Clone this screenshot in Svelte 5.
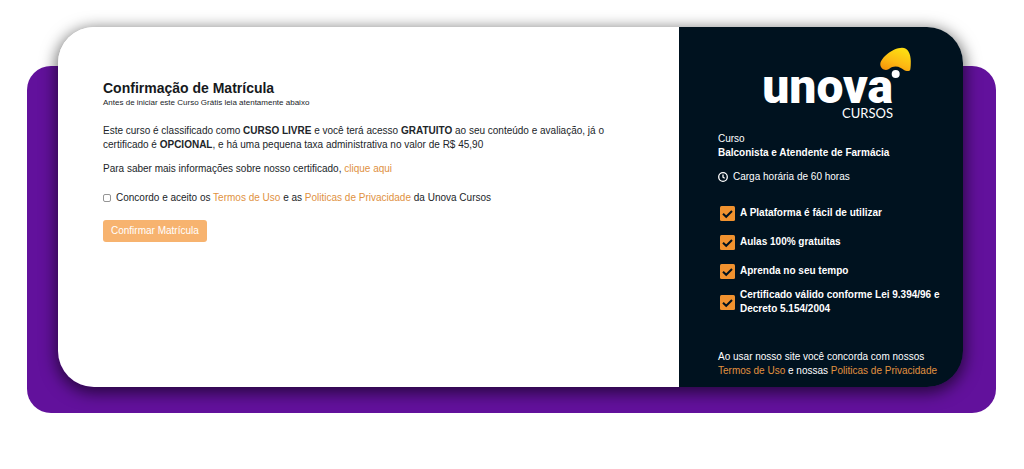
<script>
  const benefits = [
    'A Plataforma é fácil de utilizar',
    'Aulas 100% gratuitas',
    'Aprenda no seu tempo',
    'Certificado válido conforme Lei 9.394/96 e Decreto 5.154/2004'
  ];
  let accepted = $state(false);
</script>

<div class="backdrop">
  <div class="card">
    <main>
      <h1>Confirmação de Matrícula</h1>
      <p class="lead">Antes de iniciar este Curso Grátis leia atentamente abaixo</p>
      <p class="about">
        Este curso é classificado como <b>CURSO LIVRE</b> e você terá acesso <b>GRATUITO</b> ao seu conteúdo e avaliação, já o certificado é <b>OPCIONAL</b>, e há uma pequena taxa administrativa no valor de R$ 45,90
      </p>
      <p class="more">Para saber mais informações sobre nosso certificado, <a href="#certificado">clique aqui</a></p>
      <div class="agree">
        <input id="accept" type="checkbox" bind:checked={accepted} />
        <label for="accept">Concordo e aceito os <a href="#termos">Termos de Uso</a> e as <a href="#privacidade">Politicas de Privacidade</a> da Unova Cursos</label>
      </div>
      <button type="button" class:ready={accepted}>Confirmar Matrícula</button>
    </main>

    <aside>
      <div class="logo">
        <svg class="mark" viewBox="0 0 32 32" aria-hidden="true">
          <defs>
            <linearGradient id="flame" x1="0" y1="1" x2="0.5" y2="0">
              <stop offset="0" stop-color="#f58a07" />
              <stop offset="0.5" stop-color="#fdb913" />
              <stop offset="1" stop-color="#fddb12" />
            </linearGradient>
          </defs>
          <path fill="url(#flame)" d="M0.3 17C1 11 12 1 22 0.8C28 0.8 30.8 7 30.8 14C30.8 17 30.8 20 30.3 22.5C30 24.5 26 24.3 24 23C21.5 21.5 19.5 19.5 15.5 19.5C10.5 19.5 9 23 6 23C3 23 0 20 0.3 17Z" />
          <circle cx="15.7" cy="27" r="4" fill="#fff" />
        </svg>
        <span class="name">unova</span>
        <span class="sub">CURSOS</span>
      </div>

      <p>Curso<br /><b>Balconista e Atendente de Farmácia</b></p>
      <p class="hours">
        <svg viewBox="0 0 10 10" aria-hidden="true">
          <circle cx="5" cy="5" r="4.3" />
          <path d="M5 2.4V5.2L6.7 6.3" />
        </svg>
        Carga horária de 60 horas
      </p>

      <ul>
        {#each benefits as benefit}
          <li>
            <svg viewBox="0 0 15 15" aria-hidden="true">
              <rect width="15" height="15" rx="1.5" fill="#f0922f" />
              <path d="M3 7.7L6.2 10.8L12 5" fill="none" stroke="#00121f" stroke-width="2" />
            </svg>
            <span>{benefit}</span>
          </li>
        {/each}
      </ul>

      <p class="legal">
        Ao usar nosso site você concorda com nossos <a href="#termos">Termos de Uso</a> e nossas <a href="#privacidade">Politicas de Privacidade</a>
      </p>
    </aside>
  </div>
</div>

<style>
  :global(body) {
    background: #fff;
  }

  .backdrop {
    display: flow-root;
    margin: 66px 28px 56px 27px;
    padding: 0 33px 26px 31px;
    border-radius: 24px;
    background: #62119c;
    color: #212529;
    font: 10px/14px "Liberation Sans", Arial, sans-serif;
  }

  .card {
    display: grid;
    grid-template-columns: 621fr 284fr;
    margin-top: -39px;
    border-radius: 36px;
    box-shadow: 0 4px 16px 2px rgba(0, 0, 0, 0.6);
  }

  p,
  h1,
  ul {
    margin: 0;
    padding: 0;
  }

  a {
    color: #e0913f;
    text-decoration: none;
  }

  main {
    padding: 52px 64px 40px 45px;
    border-radius: 36px 0 0 36px;
    background: #fff;
  }

  h1 {
    color: #16191c;
    font-size: 14px;
    line-height: 18px;
  }

  .lead {
    font-size: 8px;
    line-height: 12px;
  }

  .about {
    margin-top: 15px;
  }

  .more {
    margin-top: 10px;
  }

  .agree {
    display: flex;
    align-items: center;
    gap: 5px;
    margin-top: 15px;
  }

  input {
    appearance: none;
    width: 8px;
    height: 8px;
    margin: 0;
    border: 1px solid #959595;
    border-radius: 2px;
    background: #fff;
  }

  input:checked {
    background: #f0922f;
  }

  button {
    margin-top: 15px;
    padding: 4px 8px;
    border: 0;
    border-radius: 3px;
    background: #f7b36f;
    color: #fff;
    font: inherit;
  }

  button.ready {
    background: #f0922f;
  }

  aside {
    padding: 20px 20px 9px 39px;
    border-radius: 0 36px 36px 0;
    background: #00121f;
    color: #fff;
  }

  .logo {
    display: grid;
    justify-items: end;
    width: 175px;
    margin-bottom: 13px;
    position: relative;
  }

  .mark {
    position: absolute;
    top: 0;
    right: -19px;
    width: 32px;
    height: 32px;
  }

  .name {
    margin-top: 20px;
    font: 900 48px/40px Roboto, "Liberation Sans", sans-serif;
  }

  .sub {
    font: 400 13px/12px Lato, "Liberation Sans", sans-serif;
  }

  .hours {
    display: flex;
    align-items: center;
    gap: 5px;
    margin-top: 10px;
  }

  .hours svg {
    width: 10px;
    height: 10px;
    fill: none;
    stroke: #fff;
    stroke-width: 1.3;
  }

  ul {
    display: grid;
    gap: 5px;
    margin-top: 17px;
    padding-left: 2px;
    list-style: none;
    font-weight: bold;
  }

  li {
    display: flex;
    align-items: center;
    gap: 5px;
    min-height: 24px;
  }

  li svg {
    flex: none;
    width: 15px;
    height: 15px;
  }

  .legal {
    margin-top: 34px;
  }
</style>
